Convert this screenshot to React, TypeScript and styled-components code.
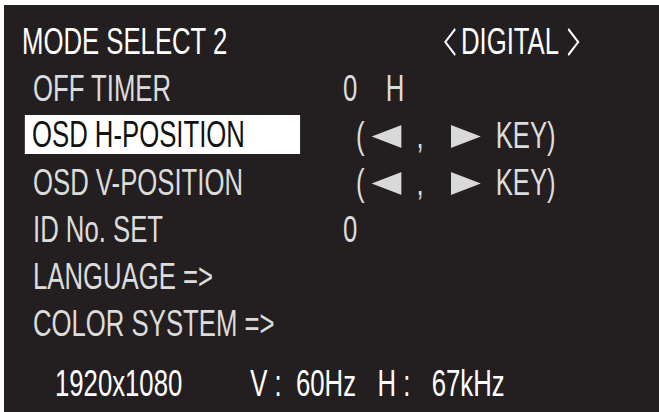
import React from "react";
import styled, { createGlobalStyle, css } from "styled-components";

// the OSD font is a condensed grotesk: Liberation Sans squeezed horizontally
const SX = 0.695;
const u = (px: number) => `${(px / SX).toFixed(2)}px`;

const GlobalStyle = createGlobalStyle`
	html, body {
		margin: 0;
		background: #fff;
	}
	body {
		font-family: "Liberation Sans", Arial, sans-serif;
	}
`;

const Screen = styled.div`
	margin: 5px 0 0 4px;
	width: 655px;
	height: 407px;
	background: #231f20;
	overflow: hidden;
`;

const Content = styled.div`
	width: ${u(655)};
	box-sizing: border-box;
	padding: 13px 0 0 ${u(29)};
	transform: scaleX(${SX});
	transform-origin: left top;
	font-size: 37px;
	color: #dcdcdc;
	white-space: pre;
`;

const Menu = styled.div`
	display: flex;
	flex-direction: column;
`;

const Row = styled.div`
	display: grid;
	grid-template-columns: ${u(310)} auto;
	align-items: start;
	height: 47px;
	line-height: 47px;
`;

const Title = styled.div`
	margin-left: -${u(11)};
	color: #fff;
`;

const Label = styled.div<{ $selected?: boolean }>`
	${(p) =>
		p.$selected &&
		css`
			margin: 3px 0 0 -${u(8)};
			padding: 1px 0 0 ${u(7)};
			width: ${u(275)};
			height: 39px;
			box-sizing: border-box;
			line-height: 38px;
			background: #fff;
			color: #111;
		`}
`;

const Value = styled.div``;

const Piece = styled.span<{ $gap?: number }>`
	margin-left: ${(p) => u(p.$gap ?? 0)};
`;

const Signal = styled.div`
	margin-left: ${u(100)};
	color: #fff;
`;

const Chevron = styled.svg<{ $gap?: number }>`
	display: inline-block;
	width: ${u(14)};
	height: 28px;
	vertical-align: -2px;
	margin-left: ${(p) => u(p.$gap ?? 0)};
`;

const Arrow = styled.svg<{ $gap: number }>`
	display: inline-block;
	width: ${u(30)};
	height: 23px;
	vertical-align: baseline;
	margin-left: ${(p) => u(p.$gap)};
`;

const Status = styled.div`
	margin: 13px 0 0 ${u(22)};
	height: 47px;
	line-height: 47px;
	color: #fff;
`;

const ChevronLeft = ({ gap }: { gap?: number }) => (
	<Chevron $gap={gap} viewBox="0 0 14 28" preserveAspectRatio="none">
		<polyline
			points="12,1 2,14 12,27"
			fill="none"
			stroke="#fff"
			strokeWidth="2.4"
			vectorEffect="non-scaling-stroke"
		/>
	</Chevron>
);

const ChevronRight = ({ gap }: { gap?: number }) => (
	<Chevron $gap={gap} viewBox="0 0 14 28" preserveAspectRatio="none">
		<polyline
			points="2,1 12,14 2,27"
			fill="none"
			stroke="#fff"
			strokeWidth="2.4"
			vectorEffect="non-scaling-stroke"
		/>
	</Chevron>
);

const KeyHint = () => (
	<Value>
		<Piece $gap={13}>(</Piece>
		<Arrow $gap={7} viewBox="0 0 10 10" preserveAspectRatio="none">
			<polygon points="0,5 10,0 10,10" fill="#d9d9d9" />
		</Arrow>
		<Piece $gap={15}>,</Piece>
		<Arrow $gap={27} viewBox="0 0 10 10" preserveAspectRatio="none">
			<polygon points="0,0 10,5 0,10" fill="#d9d9d9" />
		</Arrow>
		<Piece $gap={15}>KEY)</Piece>
	</Value>
);

export default function App() {
	return (
		<>
			<GlobalStyle />
			<Screen>
				<Content>
					<Menu>
						<Row>
							<Title>MODE SELECT 2</Title>
							<Signal>
								<ChevronLeft />
								<Piece $gap={4}>DIGITAL</Piece>
								<ChevronRight gap={7} />
							</Signal>
						</Row>
						<Row>
							<Label>OFF TIMER</Label>
							<Value>0    H</Value>
						</Row>
						<Row>
							<Label $selected>OSD H-POSITION</Label>
							<KeyHint />
						</Row>
						<Row>
							<Label>OSD V-POSITION</Label>
							<KeyHint />
						</Row>
						<Row>
							<Label>ID No. SET</Label>
							<Value>0</Value>
						</Row>
						<Row>
							<Label>LANGUAGE =&gt;</Label>
						</Row>
						<Row>
							<Label>COLOR SYSTEM =&gt;</Label>
						</Row>
					</Menu>
					<Status>
						1920x1080
						<Piece $gap={68}>V :  60Hz   H :   67kHz</Piece>
					</Status>
				</Content>
			</Screen>
		</>
	);
}
